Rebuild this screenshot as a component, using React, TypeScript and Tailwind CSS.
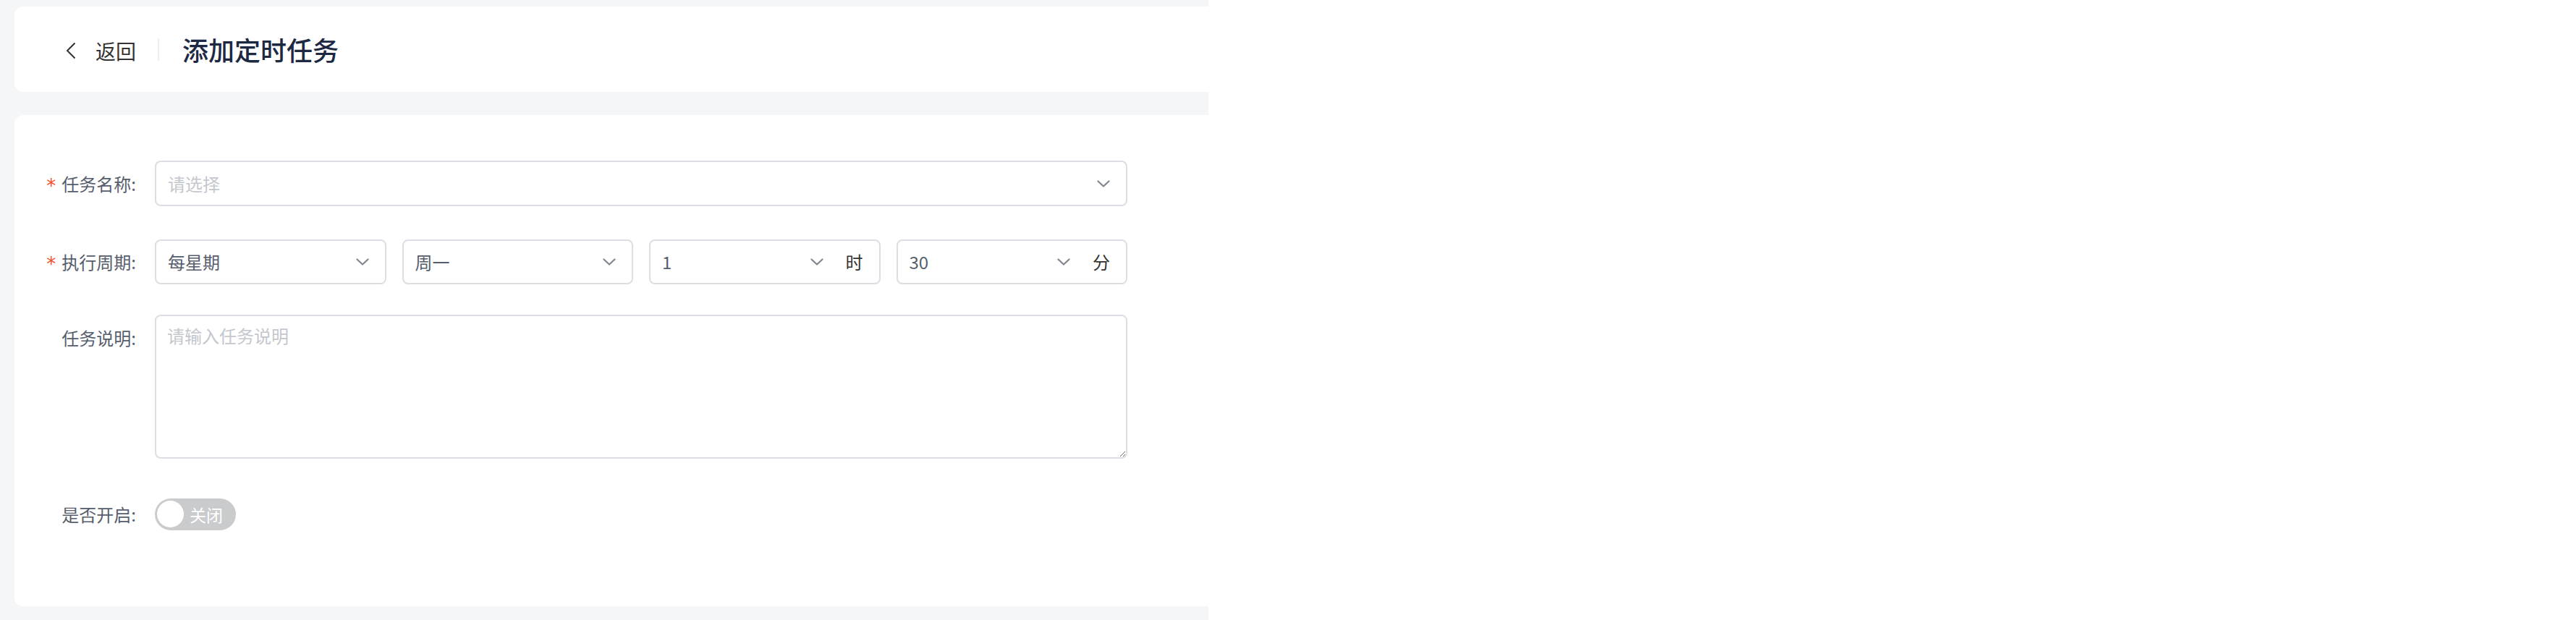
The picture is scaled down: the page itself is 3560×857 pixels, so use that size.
import React from "react";

const FONT = { fontFamily: '"Noto Sans CJK SC", "Noto Sans", sans-serif' };

function Chevron() {
  return (
    <svg width="18" height="10" viewBox="0 0 18 10" fill="none" className="shrink-0">
      <polyline points="1.5,1.5 9,8.5 16.5,1.5" stroke="#80858f" strokeWidth="2.2" strokeLinecap="round" strokeLinejoin="round" />
    </svg>
  );
}

function Label({ text, required }: { text: string; required?: boolean }) {
  return (
    <div className="w-[194px] shrink-0 pr-[26px] flex justify-end items-center text-[24px] leading-[36px] text-[#565d6c]">
      {required && (
        <span
          className="relative top-[3px] text-[26px] text-[#f0522e] mr-[8px]"
          style={{ fontFamily: '"DejaVu Sans", sans-serif' }}
        >
          *
        </span>
      )}
      <span>{text}:</span>
    </div>
  );
}

function Select({ value, placeholder, unit }: { value?: string; placeholder?: string; unit?: string }) {
  return (
    <div className="h-full w-full border-2 border-[#dcdee4] rounded-[8px] bg-white flex items-center pl-[16px] pr-[22px] text-[24px]">
      <span className={value ? "text-[#565d6c]" : "text-[#c4c7ce]"}>{value ?? placeholder}</span>
      <div className="flex-1" />
      <Chevron />
      {unit && <span className="ml-[31px] text-[#333333]">{unit}</span>}
    </div>
  );
}

export default function App() {
  return (
    <div className="min-h-screen bg-white" style={FONT}>
      <div className="w-[1670px] bg-[#f5f6f8] pl-[20px] pt-[9px] pb-[19px] flex flex-col gap-[32px]">
        {/* header */}
        <div className="w-[1700px] h-[118px] bg-white rounded-[12px] flex items-center pl-[71px]">
          <svg width="14" height="24" viewBox="0 0 14 24" fill="none" className="shrink-0 mt-[4px]">
            <polyline points="12.5,1.5 2,12 12.5,22.5" stroke="#333333" strokeWidth="2" strokeLinejoin="miter" />
          </svg>
          <span className="ml-[27px] text-[28px] leading-[40px] text-[#333333] mt-[3px]">返回</span>
          <div className="ml-[30px] w-[2px] h-[31px] bg-[#eceef1]" />
          <h1 className="ml-[32px] text-[36px] leading-[48px] font-medium text-[#1d2843]">添加定时任务</h1>
        </div>

        {/* form */}
        <div className="w-[1700px] h-[679px] bg-white rounded-[12px] pt-[63px]">
          <div className="flex h-[63px] items-stretch mb-[46px]">
            <Label text="任务名称" required />
            <div className="w-[1344px]">
              <Select placeholder="请选择" />
            </div>
          </div>

          <div className="flex h-[62px] items-stretch mb-[42px]">
            <Label text="执行周期" required />
            <div className="w-[1344px] grid grid-cols-4 gap-x-[22px]">
              <Select value="每星期" />
              <Select value="周一" />
              <Select value="1" unit="时" />
              <Select value="30" unit="分" />
            </div>
          </div>

          <div className="flex items-start mb-[45px]">
            <div className="pt-[14px]">
              <Label text="任务说明" />
            </div>
            <textarea
              placeholder="请输入任务说明"
              className="w-[1344px] h-[199px] border-2 border-[#dcdee4] rounded-[8px] px-[15px] pt-[9px] text-[24px] leading-[36px] text-[#565d6c] placeholder:text-[#c4c7ce] outline-none"
              style={FONT}
            />
          </div>

          <div className="flex h-[63px] items-center">
            <Label text="是否开启" />
            <div className="w-[112px] h-[44px] rounded-full bg-[#cacbcd] flex items-center pl-[3px]">
              <div className="w-[37px] h-[37px] rounded-full bg-white" />
              <span className="ml-[8px] text-[23px] leading-[30px] text-white">关闭</span>
            </div>
          </div>
        </div>
      </div>
    </div>
  );
}
